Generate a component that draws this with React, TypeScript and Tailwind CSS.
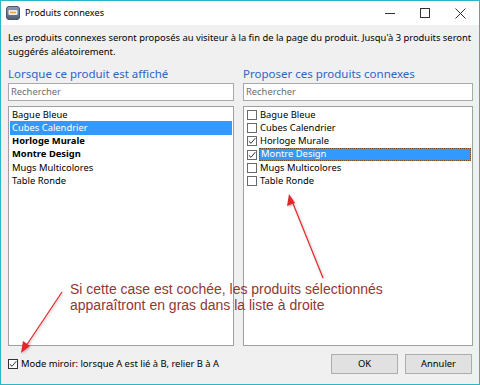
import React from 'react';

const LEFT_ITEMS = [
  { name: 'Bague Bleue', bold: false, selected: false },
  { name: 'Cubes Calendrier', bold: false, selected: true },
  { name: 'Horloge Murale', bold: true, selected: false },
  { name: 'Montre Design', bold: true, selected: false },
  { name: 'Mugs Multicolores', bold: false, selected: false },
  { name: 'Table Ronde', bold: false, selected: false },
];

const RIGHT_ITEMS = [
  { name: 'Bague Bleue', checked: false, selected: false },
  { name: 'Cubes Calendrier', checked: false, selected: false },
  { name: 'Horloge Murale', checked: true, selected: false },
  { name: 'Montre Design', checked: true, selected: true },
  { name: 'Mugs Multicolores', checked: false, selected: false },
  { name: 'Table Ronde', checked: false, selected: false },
];

function CheckBox({ checked, dark }: { checked: boolean; dark?: boolean }) {
  return (
    <span
      className={`w-[10px] h-[10px] shrink-0 bg-white border flex items-center justify-center ${
        dark ? 'border-[#333333]' : 'border-[#6a6a6a]'
      }`}
    >
      {checked && (
        <svg width="8" height="8" viewBox="0 0 8 8">
          <path d="M0.8 4.2 L3 6.3 L7.3 1.2" fill="none" stroke="#333" strokeWidth="1" />
        </svg>
      )}
    </span>
  );
}

function AppIcon() {
  return (
    <svg width="14" height="14" viewBox="0 0 14 14">
      <defs>
        <linearGradient id="ig" x1="0" y1="0" x2="0" y2="1">
          <stop offset="0" stopColor="#8aa0b8" />
          <stop offset="1" stopColor="#4b5d73" />
        </linearGradient>
      </defs>
      <rect x="0.5" y="0.5" width="13" height="13" rx="2.5" fill="url(#ig)" stroke="#45566b" />
      <rect x="2.5" y="4" width="9" height="5" rx="1" fill="#e9eef4" />
      <path d="M4 6.5 h6" stroke="#e8a934" strokeWidth="1.6" />
    </svg>
  );
}

export default function App() {
  return (
    <div
      className="relative w-[480px] h-[385px] border border-[#2cb6c4] bg-[#f0f0f0] flex flex-col text-[#000] overflow-hidden"
      style={{ fontFamily: '"Noto Sans", "Open Sans", sans-serif' }}
    >
      {/* title bar */}
      <div className="h-[24px] bg-white flex items-center shrink-0">
        <div className="pl-[5px] pr-[5px] flex items-center">
          <AppIcon />
        </div>
        <span className="text-[9.2px] text-[#000]">Produits connexes</span>
        <div className="ml-auto flex items-center h-full">
          <div className="w-[35px] h-full flex items-center justify-center">
            <div className="w-[10px] h-px bg-[#333]" />
          </div>
          <div className="w-[35px] h-full flex items-center justify-center">
            <div className="w-[10px] h-[10px] border border-[#333]" />
          </div>
          <div className="w-[37px] h-full flex items-center justify-center">
            <svg width="11" height="11" viewBox="0 0 11 11">
              <path d="M0.5 0.5 L10.5 10.5 M10.5 0.5 L0.5 10.5" stroke="#333" strokeWidth="1" />
            </svg>
          </div>
        </div>
      </div>

      {/* body */}
      <div className="flex-1 flex flex-col px-[7px]">
        <div className="pt-[6px] text-[9.4px] leading-[14px]">
          <div className="whitespace-nowrap">
            Les produits connexes seront proposés au visiteur à la fin de la page du produit. Jusqu'à 3 produits seront
          </div>
          <div className="whitespace-nowrap">suggérés aléatoirement.</div>
        </div>

        <div className="grid grid-cols-[226px_230px] gap-x-[9px] mt-[7px]">
          <div className="flex flex-col">
            <div className="text-[11.5px] leading-[16px] text-[#2f63c6] whitespace-nowrap">
              Lorsque ce produit est affiché
            </div>
            <div className="mt-[1px] h-[18px] bg-white border border-[#a9a9a9] flex items-center px-[2px] text-[9.4px] text-[#6d6d6d]">
              Rechercher
            </div>
            <div className="mt-[5px] h-[240px] bg-white border border-[#a0a0a0] p-[1px] flex flex-col">
              {LEFT_ITEMS.map((it) => (
                <div
                  key={it.name}
                  className={`h-[13.3px] flex items-center px-[2px] text-[9.4px] whitespace-nowrap ${
                    it.selected ? 'bg-[#3399ff] text-white' : ''
                  } ${it.bold ? 'font-bold' : ''}`}
                >
                  {it.name}
                </div>
              ))}
            </div>
          </div>

          <div className="flex flex-col">
            <div className="text-[11.5px] leading-[16px] text-[#2f63c6] whitespace-nowrap">
              Proposer ces produits connexes
            </div>
            <div className="mt-[1px] h-[18px] bg-white border border-[#a9a9a9] flex items-center px-[2px] text-[9.4px] text-[#6d6d6d]">
              Rechercher
            </div>
            <div className="mt-[5px] h-[240px] bg-white border border-[#a0a0a0] p-[1px] flex flex-col">
              {RIGHT_ITEMS.map((it) => (
                <div key={it.name} className="h-[13.3px] flex items-center pl-[2px] text-[9.4px] whitespace-nowrap">
                  <CheckBox checked={it.checked} />
                  <span
                    className={`ml-[2px] h-full flex items-center px-[1px] ${
                      it.selected
                        ? 'flex-1 bg-[#3399ff] text-white border border-dotted border-[#7a4a1a]'
                        : ''
                    }`}
                  >
                    {it.name}
                  </span>
                </div>
              ))}
            </div>
          </div>
        </div>

        {/* bottom row */}
        <div className="mt-[8px] flex items-center">
          <div className="flex items-center gap-[3px]">
            <CheckBox checked dark />
            <span className="text-[9.4px] whitespace-nowrap">Mode miroir: lorsque A est lié à B, relier B à A</span>
          </div>
          <div className="ml-auto flex gap-[7px]">
            <button className="w-[67px] h-[20px] bg-[#e1e1e1] border border-[#adadad] text-[9.4px] flex items-center justify-center">
              OK
            </button>
            <button className="w-[67px] h-[20px] bg-[#e1e1e1] border border-[#adadad] text-[9.4px] flex items-center justify-center">
              Annuler
            </button>
          </div>
        </div>
      </div>

      {/* annotation overlay */}
      <div
        className="absolute left-[69px] top-[280px] text-[14px] leading-[16px] text-[#943634] whitespace-nowrap"
        style={{ fontFamily: '"Liberation Sans", Arial, sans-serif' }}
      >
        <div>Si cette case est cochée, les produits sélectionnés</div>
        <div>apparaîtront en gras dans la liste à droite</div>
      </div>
      <svg className="absolute left-0 top-0 pointer-events-none" width="480" height="385" viewBox="0 0 480 385">
        <defs>
          <filter id="sh" x="-50%" y="-50%" width="200%" height="200%">
            <feDropShadow dx="1" dy="1" stdDeviation="1" floodColor="#000" floodOpacity="0.25" />
          </filter>
        </defs>
        <g filter="url(#sh)">
          <line x1="61" y1="291" x2="25" y2="345" stroke="#e3262b" strokeWidth="1.2" />
          <polygon points="20,352 22,340 29,345" fill="#e3262b" />
          <line x1="322" y1="277" x2="291" y2="200" stroke="#e3262b" strokeWidth="1.2" />
          <polygon points="288,193 286,205 294,202" fill="#e3262b" />
        </g>
      </svg>
    </div>
  );
}
